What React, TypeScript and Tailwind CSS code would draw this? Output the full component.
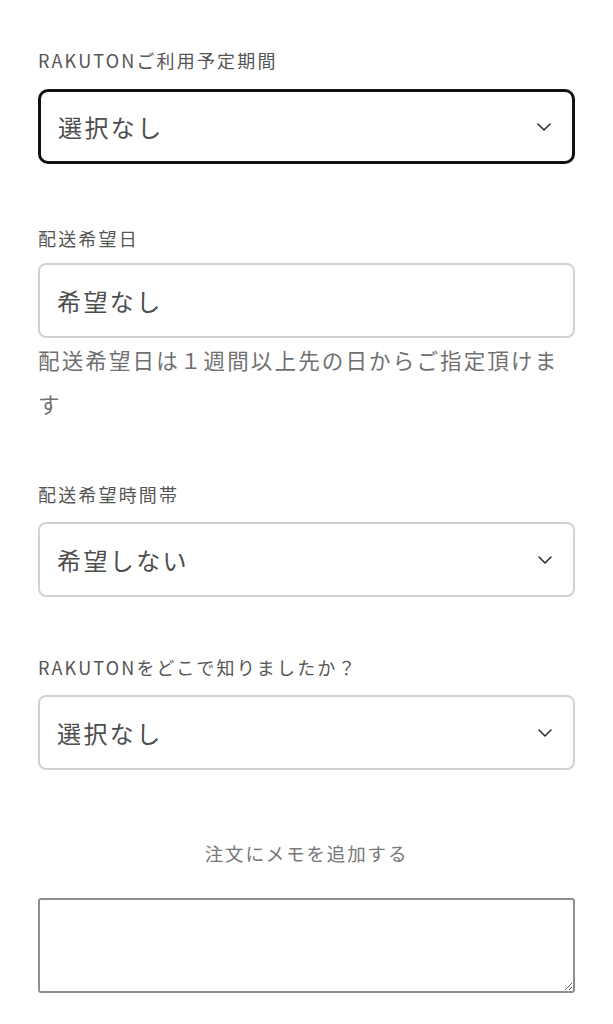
import { ChevronDown } from "lucide-react";

const font = { fontFamily: '"Noto Sans CJK JP", "Noto Sans", sans-serif' };

function Label({ text, className }: { text: string; className?: string }) {
	return (
		<div className={`text-[18px] leading-[28px] tracking-[0.12em] text-[#555555] ${className ?? ""}`}>
			{text}
		</div>
	);
}

function SelectBox({ value, focused, className }: { value: string; focused?: boolean; className?: string }) {
	return (
		<div
			className={`flex h-[75px] items-center justify-between bg-white pl-[17px] pr-[16px] ${focused
				? "border-[3px] border-[#111111] rounded-[10px]"
				: "border-2 border-[#d2d2d2] rounded-[8px]"
				} ${className ?? ""}`}
		>
			<span className="text-[24px] tracking-[0.1em] text-[#4d4d4d]">{value}</span>
			<ChevronDown className="h-[24px] w-[24px] text-[#2b2b2b]" strokeWidth={1.5} />
		</div>
	);
}

export default function App() {
	return (
		<div className="min-h-screen bg-white px-[38px] pt-[46px] pb-[30px]" style={font}>

			<Label text="RAKUTONご利用予定期間" />
			<SelectBox value="選択なし" focused className="mt-[15px]" />

			<Label text="配送希望日" className="mt-[60px]" />
			<div className="mt-[11px] flex h-[75px] items-center border-2 border-[#d2d2d2] rounded-[8px] bg-white pl-[17px]">
				<span className="text-[24px] tracking-[0.1em] text-[#4d4d4d]">希望なし</span>
			</div>
			<p className="text-[21.5px] leading-[44px] tracking-[0.1em] text-[#707070]">
				配送希望日は１週間以上先の日からご指定頂けます
			</p>

			<Label text="配送希望時間帯" className="mt-[54px]" />
			<SelectBox value="希望しない" className="mt-[14px]" />

			<Label text="RAKUTONをどこで知りましたか？" className="mt-[56px]" />
			<SelectBox value="選択なし" className="mt-[14px]" />

			<div className="mt-[69px] text-center text-[18.5px] leading-[28px] tracking-[0.1em] text-[#777777]">
				注文にメモを追加する
			</div>

			<textarea
				className="mt-[31px] block h-[95px] w-full rounded-[3px] border-2 border-[#8f8f8f] bg-white p-2 outline-none"
			/>

		</div>
	);
}
